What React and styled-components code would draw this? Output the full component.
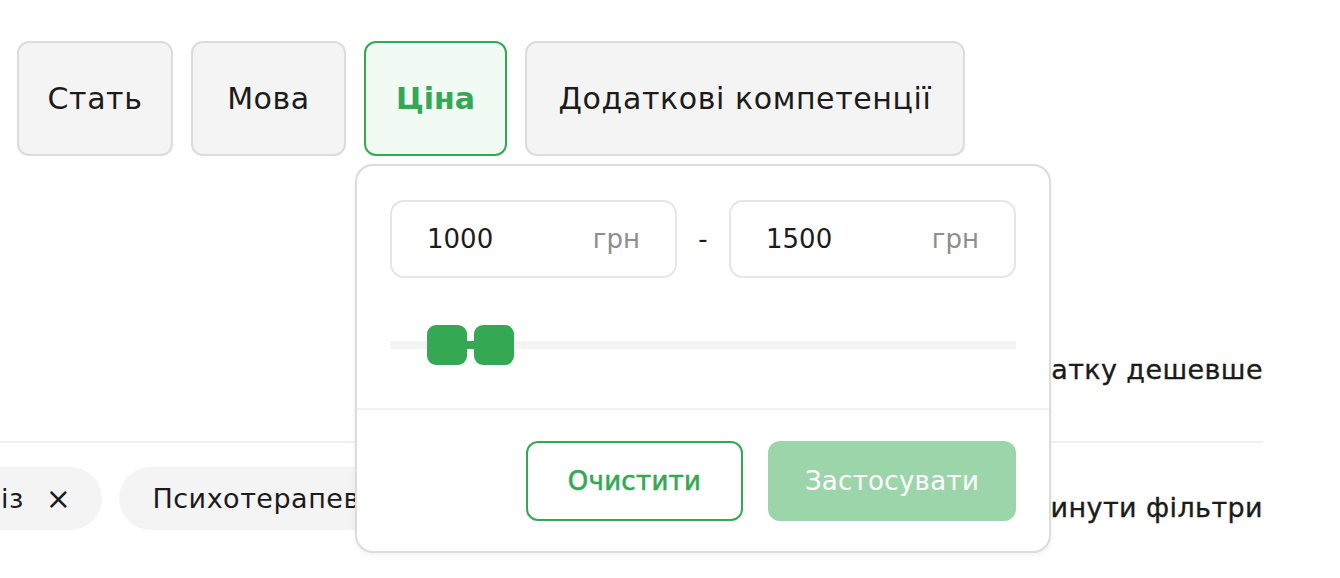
import React from 'react'
import styled, { createGlobalStyle } from 'styled-components'

const GREEN = '#34a853'
const FONT = '"DejaVu Sans", "Noto Sans", sans-serif'

const GlobalStyle = createGlobalStyle`
  html, body {
    margin: 0;
    padding: 0;
    background: #ffffff;
    overflow: hidden;
  }
  body {
    font-family: ${FONT};
    color: #1b1b1b;
  }
`

const Page = styled.div`
  width: 1340px;
  height: 578px;
  box-sizing: border-box;
  padding: 41px 77px 0 17px;
  position: relative;
  overflow: hidden;
`

const FilterRow = styled.div`
  display: flex;
  gap: 18px;
`

const FilterButton = styled.button`
  width: ${p => p.$w}px;
  height: 115px;
  padding: 0;
  box-sizing: border-box;
  border-radius: 12px;
  border: 2px solid ${p => (p.$active ? GREEN : '#dcdcdc')};
  background: ${p => (p.$active ? '#f2fbf3' : '#f4f4f4')};
  color: ${p => (p.$active ? GREEN : '#1b1b1b')};
  font-family: ${FONT};
  font-size: 30px;
  letter-spacing: ${p => (p.$active ? 0 : 0.6)}px;
  font-weight: ${p => (p.$active ? 700 : 400)};
  cursor: pointer;
`

const Content = styled.div`
  position: relative;
  display: flow-root;
`

const SortRow = styled.div`
  display: flex;
  justify-content: flex-end;
  align-items: center;
  height: 80px;
  margin-top: 173px;
  font-size: 27px;
  letter-spacing: 0.4px;
  -webkit-text-stroke: 0.35px #1b1b1b;
`

const Divider = styled.div`
  height: 2px;
  background: #f1f1f1;
  margin: 32px 0 0 -17px;
`

const ChipRow = styled.div`
  display: flex;
  align-items: center;
  justify-content: space-between;
  margin: 24px 0 0 -17px;
`

const Chips = styled.div`
  display: flex;
  gap: 17px;
  margin-left: -104px;
`

const Chip = styled.div`
  display: flex;
  align-items: center;
  gap: 22px;
  height: 63px;
  padding: 0 31px 0 33px;
  border-radius: 32px;
  background: #f4f4f4;
  font-size: 27px;
  letter-spacing: 0.5px;
  white-space: nowrap;
`

const ChipClose = styled.span`
  font-size: 30px;
  line-height: 1;
`

const ResetLink = styled.div`
  font-size: 27px;
  letter-spacing: 0.4px;
  -webkit-text-stroke: 0.35px #1b1b1b;
  margin-top: 18px;
`

const Popup = styled.div`
  position: absolute;
  top: 8px;
  left: 338px;
  width: 696px;
  height: 389px;
  box-sizing: border-box;
  background: #ffffff;
  border: 2px solid #dcdcdc;
  border-radius: 18px;
  box-shadow: 0 2px 6px rgba(0, 0, 0, 0.06);
  display: flex;
  flex-direction: column;
`

const PopupBody = styled.div`
  padding: 34px 33px 0 33px;
  height: 244px;
  box-sizing: border-box;
  border-bottom: 2px solid #f1f1f1;
`

const InputsRow = styled.div`
  display: flex;
  align-items: center;
`

const PriceInput = styled.div`
  flex: 1;
  height: 78px;
  box-sizing: border-box;
  border: 2px solid #e6e6e6;
  border-radius: 14px;
  display: flex;
  align-items: center;
  justify-content: space-between;
  padding: 0 35px 0 35px;
`

const PriceValue = styled.span`
  font-size: 26px;
  color: #1b1b1b;
`

const Currency = styled.span`
  font-size: 26px;
  color: #8e8e8e;
`

const Dash = styled.span`
  width: 52px;
  text-align: center;
  font-size: 26px;
`

const SliderBox = styled.div`
  position: relative;
  height: 40px;
  margin-top: 47px;
`

const Track = styled.div`
  position: absolute;
  left: 0;
  right: 0;
  top: 16px;
  height: 8px;
  background: #f4f4f4;
`

const Range = styled.div`
  position: absolute;
  top: 16px;
  height: 8px;
  background: ${GREEN};
`

const Thumb = styled.div`
  position: absolute;
  top: 0;
  width: 40px;
  height: 40px;
  border-radius: 9px;
  background: ${GREEN};
`

const Footer = styled.div`
  flex: 1;
  display: flex;
  justify-content: flex-end;
  align-items: center;
  gap: 25px;
  padding: 0 33px 0 0;
`

const ActionButton = styled.button`
  height: 80px;
  width: ${p => p.$w}px;
  box-sizing: border-box;
  border-radius: 12px;
  font-family: ${FONT};
  font-size: 26px;
  letter-spacing: 0.3px;
  font-weight: 400;
  -webkit-text-stroke: ${p => (p.$primary ? 0 : 0.6)}px ${GREEN};
  border: 2px solid ${p => (p.$primary ? 'transparent' : GREEN)};
  background: ${p => (p.$primary ? '#9dd5ab' : '#ffffff')};
  color: ${p => (p.$primary ? '#ffffff' : GREEN)};
`

const TRACK_W = 626
const THUMB = 40
const MIN = 606
const MAX = 6840

const pos = v => ((v - MIN) / (MAX - MIN)) * (TRACK_W - THUMB)

const PriceSlider = ({ from, to }) => {
  const a = pos(from)
  const b = pos(to)
  return (
    <SliderBox>
      <Track />
      <Range style={{ left: a + THUMB / 2, width: b - a }} />
      <Thumb style={{ left: a }} />
      <Thumb style={{ left: b }} />
    </SliderBox>
  )
}

const filters = [
  { label: 'Стать', w: 156 },
  { label: 'Мова', w: 155 },
  { label: 'Ціна', w: 143, active: true },
  { label: 'Додаткові компетенції', w: 440 },
]

const App = () => {
  const from = 1000
  const to = 1500
  return (
    <>
      <GlobalStyle />
      <Page>
        <FilterRow>
          {filters.map(f => (
            <FilterButton key={f.label} $w={f.w} $active={f.active}>
              {f.label}
            </FilterButton>
          ))}
        </FilterRow>
        <Content>
          <SortRow>Спочатку дешевше</SortRow>
          <Divider />
          <ChipRow>
            <Chips>
              <Chip>Аналіз <ChipClose>×</ChipClose></Chip>
              <Chip>Психотерапевт <ChipClose>×</ChipClose></Chip>
            </Chips>
            <ResetLink>Скинути фільтри</ResetLink>
          </ChipRow>
          <Popup>
            <PopupBody>
              <InputsRow>
                <PriceInput>
                  <PriceValue>{from}</PriceValue>
                  <Currency>грн</Currency>
                </PriceInput>
                <Dash>-</Dash>
                <PriceInput>
                  <PriceValue>{to}</PriceValue>
                  <Currency>грн</Currency>
                </PriceInput>
              </InputsRow>
              <PriceSlider from={from} to={to} />
            </PopupBody>
            <Footer>
              <ActionButton $w={217}>Очистити</ActionButton>
              <ActionButton $w={248} $primary>Застосувати</ActionButton>
            </Footer>
          </Popup>
        </Content>
      </Page>
    </>
  )
}

export default App
